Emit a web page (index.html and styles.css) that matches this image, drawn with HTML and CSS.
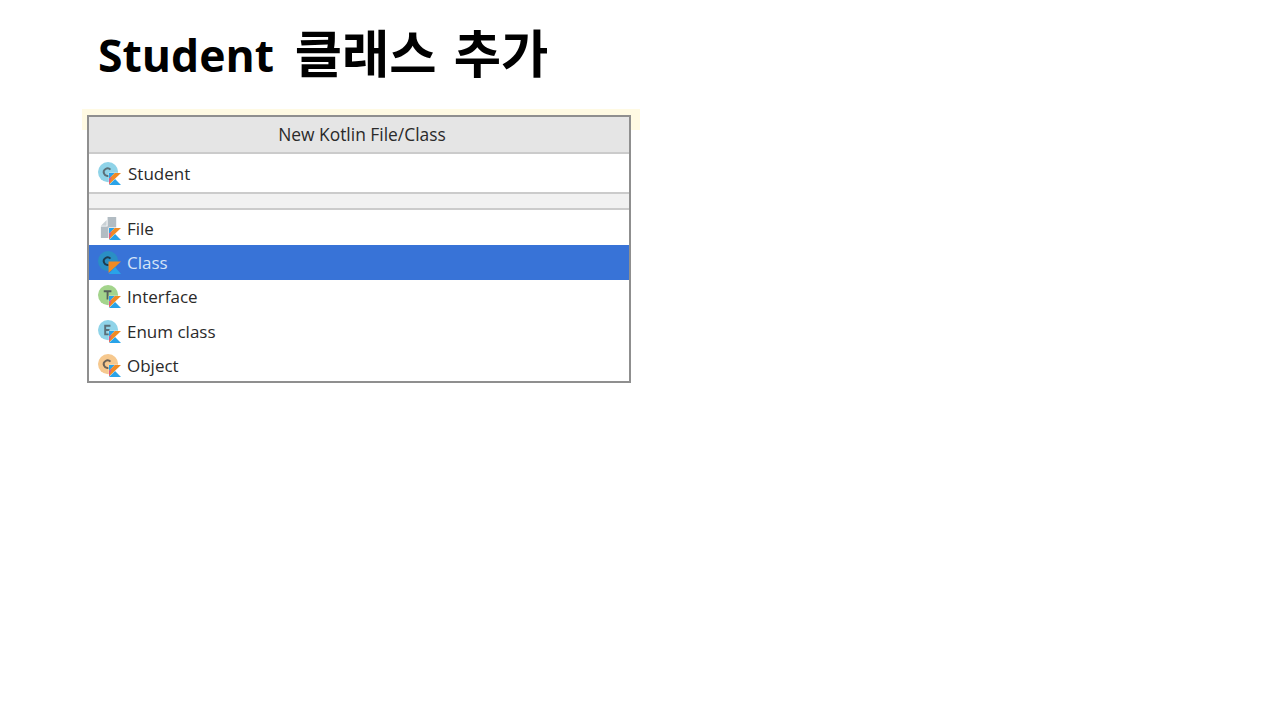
FILE: index.html
```html
<!DOCTYPE html>
<html lang="ko">
<head>
  <meta charset="UTF-8">
  <meta name="viewport" content="width=device-width, initial-scale=1.0">
  <title>Student 클래스 추가</title>
  <link rel="stylesheet" href="styles.css">
</head>
<body>
  <svg class="defs" width="0" height="0">
    <symbol id="kotlin" viewBox="0 0 13 13">
      <rect width="13" height="13" fill="#fff"/>
      <polygon points="0.5,0.5 6.5,0.5 0.5,6.5" fill="#29a3e8"/>
      <polygon points="6.5,0.5 13,0.5 0.5,12.5 0.5,6.5" fill="#f08a24"/>
      <polygon points="0.5,13 6.8,6.8 13,13" fill="#29a3e8"/>
      <polygon points="0.5,6.5 3.5,3.8 0.5,12.5" fill="#d9568c"/>
    </symbol>
  </svg>

  <h1 class="title">Student <span class="title-ko">클래스 추가</span></h1>

  <div class="shot">
    <div class="dialog">
      <div class="dialog-title">New Kotlin File/Class</div>
      <div class="name-row">
        <svg class="icon" viewBox="0 0 24 24">
          <circle cx="10.5" cy="10.5" r="10.5" fill="#8fd3e8"/>
          <path d="M13 8 A4 4 0 1 0 11 14.5" fill="none" stroke="#5a6f78" stroke-width="2"/>
          <use href="#kotlin" x="11" y="11" width="13" height="13"/>
        </svg>
        <span>Student</span>
      </div>
      <div class="spacer"></div>
      <ul class="kinds">
        <li class="kind">
          <svg class="icon" viewBox="0 0 24 24">
            <polygon points="3,9 9,9 9,3" fill="#c9d0d5"/>
            <path d="M10 0 H19 V11 H11 V22 H3 V10 H10 Z" fill="#b2bcc3"/>
            <use href="#kotlin" x="11" y="11" width="13" height="13"/>
          </svg>
          <span>File</span>
        </li>
        <li class="kind selected">
          <svg class="icon" viewBox="0 0 24 24">
            <circle cx="10.5" cy="10.5" r="10.5" fill="#2a8fc4"/>
            <path d="M13 8 A4 4 0 1 0 11 14.5" fill="none" stroke="#1d3c50" stroke-width="2"/>
            <polygon points="11,11 24,11 11,23" fill="#f08a24"/>
            <polygon points="11,24 18,17 24,24" fill="#29a3e8"/>
          </svg>
          <span>Class</span>
        </li>
        <li class="kind">
          <svg class="icon" viewBox="0 0 24 24">
            <circle cx="10.5" cy="10.5" r="10.5" fill="#a3d48c"/>
            <path d="M6 6.5 H14 M10 6.5 V15" fill="none" stroke="#55605a" stroke-width="2"/>
            <use href="#kotlin" x="11" y="11" width="13" height="13"/>
          </svg>
          <span>Interface</span>
        </li>
        <li class="kind">
          <svg class="icon" viewBox="0 0 24 24">
            <circle cx="10.5" cy="10.5" r="10.5" fill="#8fd3e8"/>
            <path d="M13 6 H7.5 V15 H13 M7.5 10.5 H12" fill="none" stroke="#5a6f78" stroke-width="2"/>
            <use href="#kotlin" x="11" y="11" width="13" height="13"/>
          </svg>
          <span>Enum class</span>
        </li>
        <li class="kind">
          <svg class="icon" viewBox="0 0 24 24">
            <circle cx="10.5" cy="10.5" r="10.5" fill="#f6c88e"/>
            <path d="M13 8 A4 4 0 1 0 11 14.5" fill="none" stroke="#6b6258" stroke-width="2"/>
            <use href="#kotlin" x="11" y="11" width="13" height="13"/>
          </svg>
          <span>Object</span>
        </li>
      </ul>
    </div>
  </div>
</body>
</html>
```

FILE: styles.css
```css
body {
  margin: 0;
  background: #fff;
  color: #000;
  font-family: "Open Sans", "Noto Sans CJK KR", sans-serif;
}
.defs {
  display: block;
}
.title {
  margin: 0;
  padding: 22px 0 0 98px;
  height: 87px;
  box-sizing: border-box;
  font-size: 44.5px;
  line-height: 60px;
  font-weight: 700;
  word-spacing: 4px;
}
.title-ko {
  margin-left: 5px;
  font-size: 51.4px;
  font-weight: 700;
  position: relative;
  top: 1px;
}
.shot {
  width: 558px;
  box-sizing: border-box;
  margin: 22px 0 0 82px;
  padding: 6px 9px 0 5px;
  background: linear-gradient(#fffae3 21px, transparent 21px);
}
.dialog {
  border: 2px solid #8f8f8f;
  background: #fff;
  color: #2a2a2a;
  font-size: 17px;
  height: 268px;
  box-sizing: border-box;
  overflow: hidden;
}
.dialog-title {
  height: 35px;
  line-height: 35px;
  padding-left: 6px;
  text-align: center;
  font-size: 17.4px;
  background: #e5e5e5;
  border-bottom: 2px solid #cbcbcb;
}
.name-row {
  display: flex;
  align-items: center;
  gap: 7px;
  height: 38px;
  padding-left: 9px;
  border-bottom: 2px solid #cbcbcb;
}
.spacer {
  height: 14px;
  background: #f1f1f1;
  border-bottom: 2px solid #cbcbcb;
}
.kinds {
  list-style: none;
  margin: 0;
  padding: 1px 0 0;
}
.kind {
  display: flex;
  align-items: center;
  gap: 6px;
  height: 34.3px;
  padding-left: 9px;
}
.kind.selected {
  background: #3873d7;
  color: #d5e3f7;
}
.icon {
  width: 23px;
  height: 23px;
  flex: none;
}
```
